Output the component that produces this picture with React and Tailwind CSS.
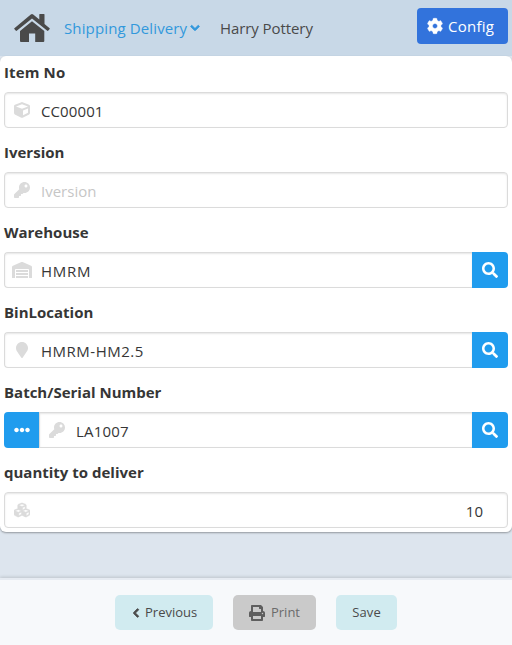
import React from "react";
import { FaCog, FaCube, FaKey, FaWarehouse, FaMapMarker, FaSearch, FaEllipsisH, FaCubes, FaChevronLeft, FaChevronDown, FaPrint } from "react-icons/fa";

function HomeIcon() {
  return (
    <svg width="36" height="28" viewBox="0 0 36 28" fill="#4a4a4a" className="shrink-0">
      <path d="M16.8 .4Q18 -.4 19.2 .4L25.3 5.6V.5Q25.3 0 25.8 0H30Q30.5 0 30.5 .5V10L35.6 14.2Q36 14.6 35.7 15L34.1 16.8Q33.7 17.1 33.3 16.8L18 4.6 2.7 16.8Q2.3 17.1 1.9 16.8L.3 15Q0 14.6 .4 14.2Z" />
      <path d="M18 7.2L30.3 17V27Q30.3 28 29.3 28H21.2V19.5H15V28H7Q6 28 6 27V17Z" />
    </svg>
  );
}

function Field({ label, labelClass, icon: Icon, iconSize, iconClass, value, valueClass, placeholder, search, menu, right }) {
  return (
    <div className="h-20">
      <div className="flex h-9 items-center pb-1 text-[15px] font-bold leading-6 text-[#363636]">
        <span className={labelClass}>{label}</span>
      </div>
      <div className="flex h-9">
        {menu && (
          <button className="flex w-[35px] items-center justify-center rounded-l bg-[#209cee] text-white">
            <FaEllipsisH size={16} />
          </button>
        )}
        <div className={`flex min-w-0 flex-1 items-center border border-[#dbdbdb] bg-white shadow-[inset_0_1px_2px_rgba(10,10,10,0.1)] ${menu ? "" : "rounded-l"} ${search ? "border-r-0" : "rounded-r"}`}>
          <span className="flex w-[34px] shrink-0 justify-center text-[#dbdbdb]">
            <Icon size={iconSize || 16} className={iconClass} />
          </span>
          <span className={`flex-1 pl-0.5 pt-0.5 text-[15px] leading-6 ${right ? "pr-6 text-right" : ""} ${placeholder ? "text-[#c6c6c6]" : "text-[#363636]"}`}>
            <span className={valueClass}>{value}</span>
          </span>
        </div>
        {search && (
          <button className="flex w-9 items-center justify-center rounded-r bg-[#209cee] text-white">
            <FaSearch size={16} />
          </button>
        )}
      </div>
    </div>
  );
}

export default function App() {
  return (
    <div className="flex h-[645px] w-[512px] flex-col overflow-hidden bg-[#dde5ee] font-['Open_Sans','Noto_Sans',sans-serif] whitespace-nowrap">
      <header className="flex h-14 shrink-0 items-center bg-[#c8d8e7] pl-3.5 pr-1 text-[15px]">
        <HomeIcon />
        <span className="ml-3.5 flex w-[138px] items-center text-[#3298dc]">
          <span className="tracking-[0.13px]">Shipping Delivery</span>
          <FaChevronDown size={10} className="ml-[3px] shrink-0 overflow-visible stroke-current [stroke-width:50]" />
        </span>
        <span className="ml-[18px] tracking-[-0.08px] text-[#4a4a4a]">Harry Pottery</span>
        <button className="mb-1 ml-auto flex h-9 w-[91px] items-center rounded bg-[#3273dc] pl-2.5 text-white">
          <FaCog size={16} className="overflow-visible stroke-current [stroke-width:14]" />
          <span className="ml-[5px] tracking-[0.25px]">Config</span>
        </button>
      </header>
      <main className="h-[476px] shrink-0 rounded-md bg-white px-1 shadow-[0_1px_2px_rgba(10,10,10,0.35)]">
        <Field label="Item No" labelClass="tracking-[0.12px]" icon={FaCube} value="CC00001" valueClass="tracking-[0.1px]" />
        <Field label="Iversion" icon={FaKey} value="Iversion" placeholder />
        <Field label="Warehouse" icon={FaWarehouse} iconSize={20} value="HMRM" valueClass="tracking-[0.7px]" search />
        <Field label="BinLocation" icon={FaMapMarker} value="HMRM-HM2.5" valueClass="tracking-[0.5px]" search />
        <Field label="Batch/Serial Number" icon={FaKey} value="LA1007" valueClass="tracking-[0.2px]" search menu />
        <Field label="quantity to deliver" icon={FaCubes} iconClass="stroke-current [stroke-width:16]" value="10" right />
      </main>
      <footer className="mt-auto flex h-[67px] shrink-0 justify-center gap-5 border-t-2 border-[#e6ebf2] bg-[#f7f9fb] pt-[15px] text-[13px] text-[#4a4a4a] shadow-[0_-1px_3px_rgba(10,10,10,0.15)]">
        <button className="flex h-[35px] w-[98px] items-center rounded-[5px] bg-[#d1ebf0] pl-4">
          <FaChevronLeft size={10} className="overflow-visible stroke-current [stroke-width:50]" />
          <span className="ml-1">Previous</span>
        </button>
        <button className="flex h-[35px] w-[83px] items-center justify-center gap-1.5 rounded-[5px] bg-[#cacaca] text-[#6b6b6b]">
          <FaPrint size={16} className="text-[#5e5e5e]" />
          <span>Print</span>
        </button>
        <button className="flex h-[35px] w-[61px] items-center justify-center rounded-[5px] bg-[#d1ebf0]">
          <span className="tracking-[0.15px]">Save</span>
        </button>
      </footer>
    </div>
  );
}
